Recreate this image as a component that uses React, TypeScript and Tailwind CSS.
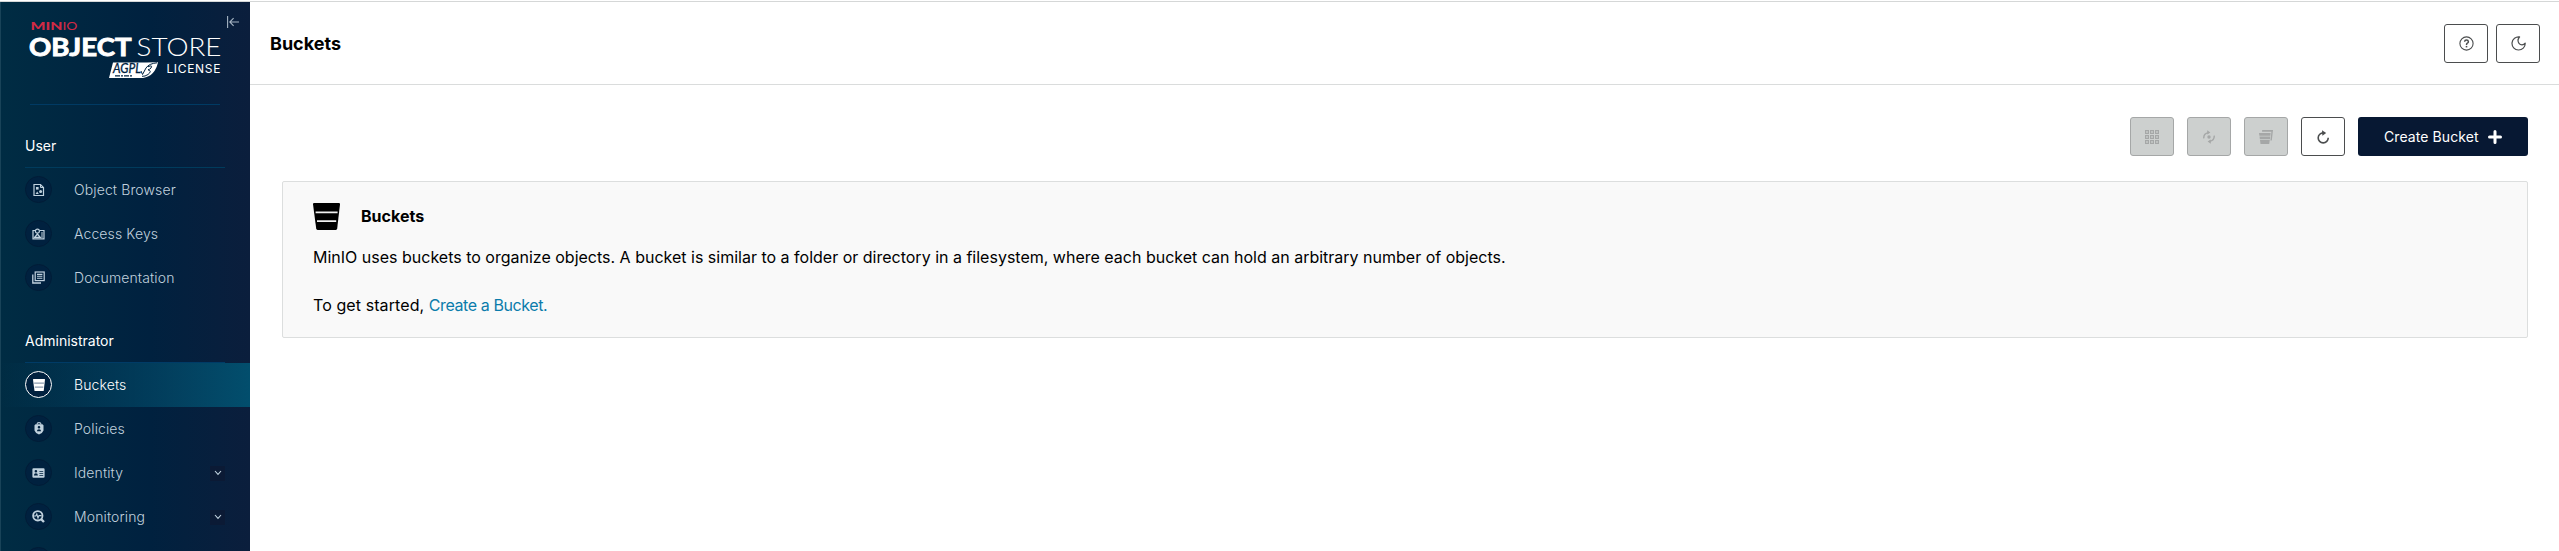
import React from "react";

const DocSearchIcon = () => (
  <svg width="12" height="14" viewBox="0 0 12 14" fill="none" stroke="currentColor">
    <path d="M1 1.5H7.5L10.5 4.5V12.5H1Z" strokeWidth="1.2" />
    <path d="M7.5 1.5V4.5H10.5" strokeWidth="1" />
    <rect x="3" y="4" width="2.6" height="2.6" fill="currentColor" stroke="none" />
    <circle cx="7.6" cy="8.6" r="1.5" fill="currentColor" stroke="none" />
    <path d="M2.6 11L4.2 8.4L5.8 11Z" fill="currentColor" stroke="none" />
  </svg>
);

const KeysIcon = () => (
  <svg width="13" height="12" viewBox="0 0 13 12" fill="none" stroke="currentColor">
    <path d="M3 2.5H1V10.8H12V2.5H8" strokeWidth="1.2" />
    <circle cx="5.4" cy="3.2" r="2" strokeWidth="1.2" />
    <path d="M2.6 9.4L5.4 6L8.2 9.4Z" strokeWidth="1.3" />
    <path d="M9 5H11M9 7H11M9 9H11" strokeWidth="1.2" />
  </svg>
);

const DocsIcon = () => (
  <svg width="13" height="13" viewBox="0 0 13 13" fill="none" stroke="currentColor">
    <rect x="3.2" y="1" width="9" height="8.6" strokeWidth="1.2" />
    <path d="M0.8 3.5V12H9" strokeWidth="1.3" />
    <path d="M5 3.4H10.4M5 5.3H10.4M5 7.2H10.4" strokeWidth="1.1" />
  </svg>
);

const BucketIcon = ({ size, gap }: { size: number; gap: string }) => (
  <svg width={size} height={size} viewBox="0 0 27 27">
    <path d="M1 0H26Q27 0 27 1.2L24.2 25.6Q24 27 22.8 27H4.6Q3.4 27 3.2 25.6L0 1.2Q0 0 1 0Z" fill="currentColor" />
    <path d="M2.6 9.3H24.6M4 18.2H23.2" stroke={gap} strokeWidth={size > 20 ? 1.7 : 2.6} />
  </svg>
);

const PoliciesIcon = () => (
  <svg width="10" height="13" viewBox="0 0 10 13">
    <path d="M3.2 2.4V1.6Q3.2.6 5 .6T6.8 1.6V2.4" fill="none" stroke="currentColor" strokeWidth="1.1" />
    <path fillRule="evenodd" d="M1.6 2.2H8.4L9.5 3.2V8.6Q8.6 11.4 5 12.6Q1.4 11.4.5 8.6V3.2ZM5 4A1.3 1.3 0 1 0 5 6.6A1.3 1.3 0 1 0 5 4ZM2.9 9.3H7.1Q7 7.2 5 7.2T2.9 9.3Z" fill="currentColor" />
  </svg>
);

const IdentityIcon = () => (
  <svg width="13" height="10" viewBox="0 0 13 10">
    <path fillRule="evenodd" d="M1.5.2H11.5Q12.6.2 12.6 1.2V8.8Q12.6 9.8 11.5 9.8H1.5Q.4 9.8.4 8.8V1.2Q.4.2 1.5.2ZM3.9 2A1.3 1.3 0 1 0 3.9 4.6A1.3 1.3 0 1 0 3.9 2ZM1.9 7.6H5.9Q5.8 5.3 3.9 5.3T1.9 7.6ZM7.4 3V3.8H11.2V3ZM7.4 5V5.8H11.2V5ZM7.4 7V7.8H11.2V7Z" fill="currentColor" />
  </svg>
);

const MonitoringIcon = () => (
  <svg width="13" height="13" viewBox="0 0 13 13" fill="none" stroke="currentColor">
    <circle cx="5.8" cy="5.8" r="4.7" strokeWidth="1.8" />
    <path d="M2 6H3.8L4.8 4L6 8L7 5.6H9.6" strokeWidth="1.1" />
    <path d="M8.8 8.8L12 12" strokeWidth="2.4" />
  </svg>
);

const CollapseIcon = () => (
  <svg width="12" height="12" viewBox="0 0 12 12" fill="none" stroke="currentColor" strokeWidth="1.1">
    <path d="M0.6 0V12M3 6H12M6.6 2.2L2.8 6L6.6 9.8" />
  </svg>
);

const ChevronDown = () => (
  <svg width="8" height="6" viewBox="0 0 8 6" fill="none" stroke="currentColor" strokeWidth="1.1">
    <path d="M1 1L4 4.4L7 1" />
  </svg>
);

const Logo = () => (
  <svg width="196" height="66" viewBox="-3 -8 196 66" fontFamily="Lato, 'Open Sans', sans-serif">
    <g fill="#d02a45">
      <text x="0.4" y="9.2" fontSize="10.8" fontWeight="900" textLength="32" lengthAdjust="spacingAndGlyphs">MIN</text>
      <text x="32.4" y="9.2" fontSize="10.8" fontWeight="400" textLength="15" lengthAdjust="spacingAndGlyphs">IO</text>
    </g>
    <g fill="#ffffff">
      <text x="-1" y="34.5" fontSize="24.6" fontWeight="700" stroke="#ffffff" strokeWidth="0.9" textLength="102.5" lengthAdjust="spacingAndGlyphs">OBJECT</text>
      <text x="106.5" y="34.5" fontSize="25" fontWeight="300" textLength="85" lengthAdjust="spacingAndGlyphs">STORE</text>
      <text x="136.4" y="52.4" fontSize="12" fontWeight="400" fontFamily="Inter, sans-serif" textLength="54">LICENSE</text>
    </g>
    <path d="M83 41.5H117Q121 41 128 41.2Q125 55 113 57H79Z" fill="#ffffff" />
    <text x="83" y="52.2" fontSize="12.5" fontWeight="400" fontStyle="italic" fill="#00223f" stroke="#00223f" strokeWidth="0.3" textLength="28" lengthAdjust="spacingAndGlyphs">AGPL</text>
    <path d="M85 54.8H103" stroke="#00223f" strokeWidth="1.2" strokeDasharray="5 1 2 1" />
    <path d="M111 50L112.5 53.5L116 47Q119 42.5 127 41.8M118 45.8Q123 43.5 121 47Q119.5 48.6 118 48.8Q122.5 50 118 53.5Q115 55.6 112 55.3" fill="none" stroke="#00223f" strokeWidth="1" />
  </svg>
);

const HelpIcon = () => (
  <svg width="15" height="15" viewBox="0 0 15 15" fill="none" stroke="currentColor">
    <circle cx="7.5" cy="7.5" r="6.6" strokeWidth="1.1" />
    <path d="M5.6 5.7Q5.7 4.1 7.5 4.1T9.4 5.7Q9.4 6.7 8.3 7.1Q7.5 7.5 7.5 8.9" strokeWidth="1.5" />
    <path d="M7.5 9.9V11.4" strokeWidth="1.6" />
  </svg>
);

const MoonIcon = () => (
  <svg width="15" height="15" viewBox="0 0 15 15" fill="none" stroke="currentColor" strokeWidth="1.2">
    <path d="M8.6 0.9A6.6 6.6 0 1 0 14.2 7.2C12.6 9.6 9.4 9.4 8 7.4C6.6 5.4 6.8 3 8.6 0.9Z" strokeLinejoin="round" />
  </svg>
);

const GridIcon = () => (
  <svg width="14" height="14" viewBox="0 0 14 14" fill="none" stroke="currentColor" strokeWidth="1.2">
    {[0, 5, 10].map((y) => [0, 5, 10].map((x) => <rect key={`${x}-${y}`} x={x + 0.6} y={y + 0.6} width="2.8" height="2.8" />))}
  </svg>
);

const LifecycleIcon = () => (
  <svg width="12" height="14" viewBox="0 0 12 14" fill="none" stroke="currentColor" strokeWidth="1.4">
    <path d="M0.8 8.4Q0.4 3.4 5.6 2.6M11.2 5.6Q11.6 10.6 6.4 11.4" />
    <path d="M4.2 0.2L7.4 2.6L4.2 4.6ZM7.8 9.4L4.6 11.4L7.8 13.8Z" fill="currentColor" stroke="none" />
    <circle cx="6" cy="7" r="1.7" fill="currentColor" stroke="none" />
  </svg>
);

const MultiBucketIcon = () => (
  <svg width="14" height="14" viewBox="0 0 14 14" fill="currentColor">
    <path d="M3.2 0H14L12.8 10.6H11.4L12.4 1.8H3Z" />
    <path d="M0 3H11.6L11.4 5.8H.4ZM.5 6.5H11.2L11 9.2H.9ZM1 9.9H10.8L10.2 14H1.5Z" />
  </svg>
);

const RefreshIcon = () => (
  <svg width="12" height="14" viewBox="0 0 12 14" fill="none" stroke="currentColor" strokeWidth="1.6">
    <path d="M6.4 2.9A5 5 0 1 0 11.2 7.8" />
    <path d="M5 0.2L9.2 2.9L5.4 5.8Z" fill="currentColor" stroke="none" />
  </svg>
);

const PlusIcon = () => (
  <svg width="14" height="14" viewBox="0 0 14 14">
    <path d="M7 1.5V12.5M1.5 7H12.5" stroke="currentColor" strokeWidth="3" strokeLinecap="round" />
  </svg>
);

type ItemProps = { label: string; icon: React.ReactNode; active?: boolean; expandable?: boolean };

const NavItem = ({ label, icon, active, expandable }: ItemProps) => (
  <a
    className={
      active
        ? "flex h-11 shrink-0 items-center bg-linear-to-r from-[#00324600] to-[#024e6d] pl-[25px] pr-[25px] text-white"
        : "flex h-11 shrink-0 items-center pl-[25px] pr-[25px] text-[#c0d1de]"
    }
  >
    <span
      className={
        active
          ? "mb-px flex size-[27px] items-center justify-center rounded-full border border-white bg-[#00213f]"
          : "mb-px flex size-[27px] items-center justify-center rounded-full border border-[#001c37] bg-[#00213f]"
      }
    >
      {icon}
    </span>
    <span className="mb-px ml-[22px] flex-1 text-[14px] font-light tracking-[0.12px]">{label}</span>
    {expandable && (
      <span className="flex size-[15px] items-center justify-center bg-[#0b1a35]">
        <ChevronDown />
      </span>
    )}
  </a>
);

const IconButton = ({ children, disabled }: { children: React.ReactNode; disabled?: boolean }) => (
  <button
    className={
      disabled
        ? "flex h-[39px] w-11 items-center justify-center rounded-[3px] border border-[#a5a7a7] bg-[#cdd0cf] text-[#a5a7a7]"
        : "flex h-[39px] w-11 items-center justify-center rounded-[3px] border border-[#4b4d4e] bg-white text-[#4b4d4e]"
    }
  >
    {children}
  </button>
);

export default function App() {
  return (
    <div className="flex h-[551px] w-full flex-col overflow-hidden bg-white font-['Inter',sans-serif] text-black">
      <div className="mt-px h-px shrink-0 bg-[#d5d7d7]" />
      <div className="flex min-h-0 flex-1">
        <aside className="flex w-[250px] shrink-0 flex-col overflow-hidden border-l border-[#194358] bg-linear-to-r from-[#002c43] via-[#00213f] via-60% to-[#0b1e3c]">
          <div className="-ml-px flex h-[103px] shrink-0 flex-col">
            <div className="flex h-[102px] items-start pl-[27px] pt-[11px]">
              <Logo />
              <span className="ml-1 mt-[3px] text-[#a6b4c3]">
                <CollapseIcon />
              </span>
            </div>
            <div className="ml-[30px] h-px w-[190px] bg-[#003a63]" />
          </div>
          <nav className="-ml-px flex flex-col">
            <div className="ml-[25px] flex h-[63px] w-[200px] items-center border-b border-[#003b5c] pt-[19px] text-[14px] text-white">
              User
            </div>
            <NavItem label="Object Browser" icon={<DocSearchIcon />} />
            <NavItem label="Access Keys" icon={<KeysIcon />} />
            <NavItem label="Documentation" icon={<DocsIcon />} />
            <div className="ml-[25px] flex h-[63px] w-[200px] items-center border-b border-[#003b66] pt-[19px] text-[14px] text-white">
              Administrator
            </div>
            <NavItem label="Buckets" icon={<BucketIcon size={12} gap="#8b9bae" />} active />
            <NavItem label="Policies" icon={<PoliciesIcon />} />
            <NavItem label="Identity" icon={<IdentityIcon />} expandable />
            <NavItem label="Monitoring" icon={<MonitoringIcon />} expandable />
            <NavItem label="" icon={null} />
          </nav>
        </aside>
        <main className="flex min-w-0 flex-1 flex-col">
          <header className="flex h-[83px] shrink-0 items-center justify-between border-b border-[#dadcdc] pl-5 pr-[19px]">
            <h1 className="text-[18px] font-bold">Buckets</h1>
            <div className="flex gap-2">
              <IconButton><HelpIcon /></IconButton>
              <IconButton><MoonIcon /></IconButton>
            </div>
          </header>
          <div className="flex flex-col pl-8 pr-[31px] pt-8">
            <div className="flex justify-end gap-[13px]">
              <IconButton disabled><GridIcon /></IconButton>
              <IconButton disabled><LifecycleIcon /></IconButton>
              <IconButton disabled><MultiBucketIcon /></IconButton>
              <IconButton><RefreshIcon /></IconButton>
              <button className="flex h-[39px] w-[170px] items-center justify-between rounded-[3px] bg-[#071833] pl-[26px] pr-[26px] text-[14px] tracking-[0.08px] text-white">
                Create Bucket
                <PlusIcon />
              </button>
            </div>
            <section className="mt-[25px] h-[157px] rounded-[2px] border border-[#dcdede] bg-[#f9f9f9] pl-[30px] pt-5">
              <div className="flex h-7 items-center">
                <BucketIcon size={27} gap="#f0f0f0" />
                <h2 className="ml-[21px] text-[16px] font-bold">Buckets</h2>
              </div>
              <p className="mt-[15px] text-[16px] leading-6">
                MinIO uses buckets to organize objects. A bucket is similar to a folder or directory in a filesystem, where each bucket can hold an arbitrary number of objects.
              </p>
              <p className="mt-6 text-[16px] leading-6 tracking-[0.09px]">
                To get started, <a className="tracking-[-0.41px] text-[#0b7cab]">Create a Bucket.</a>
              </p>
            </section>
          </div>
        </main>
      </div>
    </div>
  );
}
